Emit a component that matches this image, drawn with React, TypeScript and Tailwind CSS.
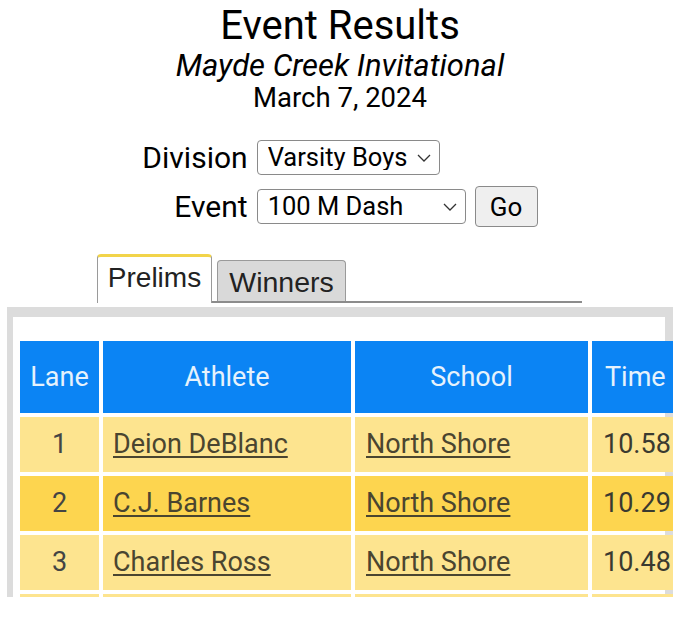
const rows = [
  { lane: '1', athlete: 'Deion DeBlanc', school: 'North Shore', time: '10.58' },
  { lane: '2', athlete: 'C.J. Barnes', school: 'North Shore', time: '10.29' },
  { lane: '3', athlete: 'Charles Ross', school: 'North Shore', time: '10.48' },
];

function Chevron() {
  return (
    <svg
      viewBox="0 0 14 8"
      className="pointer-events-none absolute right-[9px] top-[14px] h-[8px] w-[14px]"
      fill="none"
      stroke="#333"
      strokeWidth="1.3"
    >
      <polyline points="1,1 7,7 13,1" />
    </svg>
  );
}

function Select({ value, width }: { value: string; width: string }) {
  return (
    <div className={`relative h-[35px] ${width}`}>
      <select
        defaultValue={value}
        className="h-full w-full appearance-none rounded-[4px] border border-[#8a8a8a] bg-white pl-[10px] text-[25.5px] leading-none text-black outline-none"
      >
        <option>{value}</option>
      </select>
      <Chevron />
    </div>
  );
}

const link = 'text-[#4a4530] underline decoration-[2px] underline-offset-[3px]';

export default function App() {
  return (
    <div className="min-h-[625px] w-[680px] bg-white font-['Roboto',sans-serif] text-black">
      {/* Heading */}
      <div className="flex flex-col items-center pt-[3px]">
        <h1 className="text-[40px] leading-[46px]">Event Results</h1>
        <p className="text-[31px] italic leading-[33px]">Mayde Creek Invitational</p>
        <p className="text-[27.5px] leading-[32px]">March 7, 2024</p>
      </div>

      {/* Filters */}
      <div className="mt-[26px] grid grid-cols-[auto_auto] items-center justify-center gap-x-[9px] gap-y-[11px]">
        <span className="text-right text-[30px] leading-none">Division</span>
        <Select value="Varsity Boys" width="w-[183px]" />
        <span className="text-right text-[30px] leading-none">Event</span>
        <div className="flex items-center gap-[9px]">
          <Select value="100 M Dash" width="w-[209px]" />
          <button className="h-[41px] w-[63px] rounded-[4px] border border-[#8a8a8a] bg-[#efefef] text-[26px] leading-none text-black">
            Go
          </button>
        </div>
      </div>

      {/* Tabs */}
      <div className="ml-[97px] mt-[27px] flex w-[485px] items-end font-['Liberation_Sans',Arial,sans-serif]">
        <div className="flex h-[49px] w-[115px] items-center justify-center rounded-t-[4px] border-x border-t-[3px] border-x-[#9a9a9a] border-t-[#f2d44a] bg-white pb-[4px] text-[28px] text-[#222]">
          Prelims
        </div>
        <div className="flex flex-1 border-b-2 border-[#8c8c8c] pl-[5px]">
          <div className="flex h-[41px] w-[129px] items-center justify-center rounded-t-[4px] border border-b-0 border-[#9a9a9a] bg-[#d9d9d9] pt-[2px] text-[28.5px] text-[#222]">
            Winners
          </div>
        </div>
      </div>

      {/* Results frame (grid overflows the frame and is cut at the page edge) */}
      <div className="mt-[4px] h-[290px] w-[673px] overflow-hidden">
        <div className="ml-[7px] h-[300px] w-[666px] border-l-[6px] border-r-[8px] border-t-[10px] border-[#dcdcdc] bg-white pl-[7px] pt-[24px]">
          <div className="grid w-max grid-cols-[79px_248px_233px_140px] grid-rows-[72px_55px_55px_55px_55px] gap-1 text-[27px] leading-none">
            <div className="flex items-center justify-center bg-[#0b84f4] text-[#e6f2fc]">Lane</div>
            <div className="flex items-center justify-center bg-[#0b84f4] text-[#e6f2fc]">Athlete</div>
            <div className="flex items-center justify-center bg-[#0b84f4] text-[#e6f2fc]">School</div>
            <div className="flex items-center bg-[#0b84f4] pl-[13px] text-[#e6f2fc]">Time</div>
            {rows.map((r, i) => {
              const bg = i % 2 === 1 ? 'bg-[#fdd54f]' : 'bg-[#fde48f]';
              return [
                <div key={`l${i}`} className={`flex items-center justify-center text-[#444] ${bg}`}>{r.lane}</div>,
                <div key={`a${i}`} className={`flex items-center pl-[10px] ${bg}`}>
                  <a className={link}>{r.athlete}</a>
                </div>,
                <div key={`s${i}`} className={`flex items-center pl-[11px] ${bg}`}>
                  <a className={link}>{r.school}</a>
                </div>,
                <div key={`t${i}`} className={`flex items-center pl-[11px] text-[#3a3a30] ${bg}`}>{r.time}</div>,
              ];
            })}
            <div className="bg-[#fde48f]" />
            <div className="bg-[#fde48f]" />
            <div className="bg-[#fde48f]" />
            <div className="bg-[#fde48f]" />
          </div>
        </div>
      </div>
    </div>
  );
}
